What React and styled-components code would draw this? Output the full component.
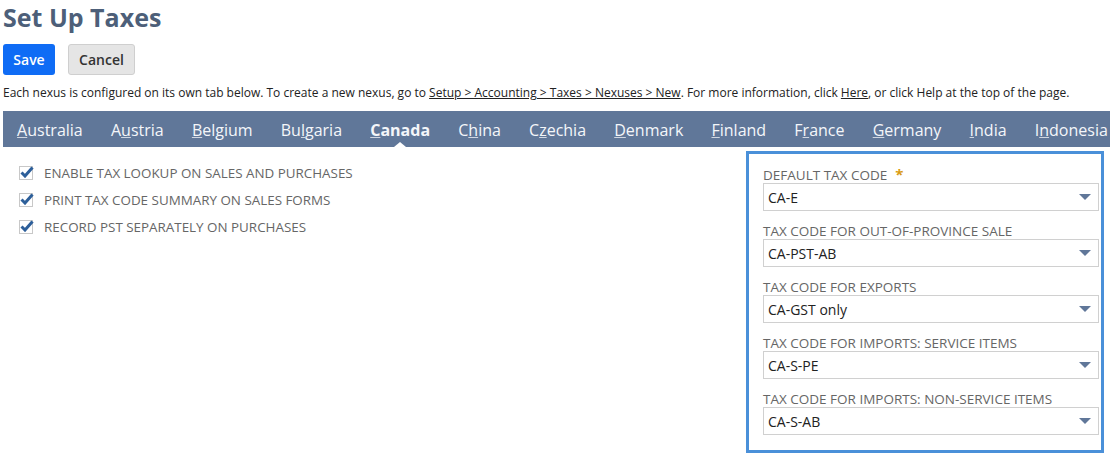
import styled, { createGlobalStyle } from "styled-components";

const GlobalStyle = createGlobalStyle`
  body {
    margin: 0;
    font-family: "Open Sans", "Liberation Sans", sans-serif;
    background: #fff;
  }
`;

const tabs = [
  { name: "Australia", key: 0 },
  { name: "Austria", key: 1 },
  { name: "Belgium", key: 0 },
  { name: "Bulgaria", key: 2 },
  { name: "Canada", key: 0, active: true },
  { name: "China", key: 1 },
  { name: "Czechia", key: 1 },
  { name: "Denmark", key: 0 },
  { name: "Finland", key: 0 },
  { name: "France", key: 1 },
  { name: "Germany", key: 0 },
  { name: "India", key: 0 },
  { name: "Indonesia", key: 1 },
];

const options = [
  "Enable tax lookup on sales and purchases",
  "Print tax code summary on sales forms",
  "Record PST separately on purchases",
];

const fields = [
  { label: "Default Tax Code", value: "CA-E", required: true },
  { label: "Tax Code for Out-of-Province Sale", value: "CA-PST-AB" },
  { label: "Tax Code for Exports", value: "CA-GST only" },
  { label: "Tax Code for Imports: Service Items", value: "CA-S-PE" },
  { label: "Tax Code for Imports: Non-Service Items", value: "CA-S-AB" },
];

const App = () => {
  return (
    <>
      <GlobalStyle />
      <Page>
        <Title>Set Up Taxes</Title>
        <ButtonRow>
          <SaveButton type="button">Save</SaveButton>
          <CancelButton type="button">Cancel</CancelButton>
        </ButtonRow>
        <Intro>
          Each nexus is configured on its own tab below. To create a new nexus, go to{" "}
          <a href="#">Setup &gt; Accounting &gt; Taxes &gt; Nexuses &gt; New</a>. For more
          information, click <a href="#">Here</a>, or click Help at the top of the page.
        </Intro>
        <TabBar>
          {tabs.map((t) => (
            <Tab key={t.name} active={t.active}>
              {t.name.slice(0, t.key)}
              <u>{t.name[t.key]}</u>
              {t.name.slice(t.key + 1)}
            </Tab>
          ))}
        </TabBar>
        <Content>
          <Options>
            {options.map((o) => (
              <OptionRow key={o}>
                <CheckBox>
                  <svg width="14" height="12" viewBox="0 0 14 12">
                    <path d="M1.5 6.5 L5 10 L12.5 1.5" fill="none" stroke="#2d5f9a" strokeWidth="3" />
                  </svg>
                </CheckBox>
                <OptionLabel>{o}</OptionLabel>
              </OptionRow>
            ))}
          </Options>
          <Panel>
            {fields.map((f) => (
              <Field key={f.label}>
                <FieldLabel>
                  {f.label}
                  {f.required && <Required>*</Required>}
                </FieldLabel>
                <Select>
                  {f.value}
                  <Arrow />
                </Select>
              </Field>
            ))}
          </Panel>
        </Content>
      </Page>
    </>
  );
};
export default App;

const Page = styled.div`
  width: 1110px;
  height: 459px;
  overflow: hidden;
`;

const Title = styled.h1`
  margin: 0;
  padding: 0 0 0 3px;
  height: 36px;
  line-height: 34px;
  font-size: 25px;
  font-weight: 700;
  color: #4d5f79;
`;

const ButtonRow = styled.div`
  display: flex;
  gap: 13px;
  padding: 8px 0 0 3px;
`;

const SaveButton = styled.button`
  height: 31px;
  width: 52px;
  border: none;
  border-radius: 3px;
  background: #0f6cf5;
  color: #fff;
  font-family: inherit;
  font-size: 14px;
  font-weight: 600;
  padding: 0;
`;

const CancelButton = styled(SaveButton)`
  width: 67px;
  background: #e5e5e5;
  border: 1px solid #cfcfcf;
  color: #333;
`;

const Intro = styled.p`
  margin: 0;
  padding: 10px 0 0 3px;
  font-size: 12px;
  line-height: 16px;
  color: #222;
  white-space: nowrap;

  a {
    color: #222;
    text-decoration: underline;
  }
`;

const TabBar = styled.div`
  display: flex;
  margin: 10px 0 0 3px;
  height: 36px;
  background: #607799;
  align-items: stretch;
`;

const Tab = styled.div`
  position: relative;
  padding: 3px 14.1px 0;
  font-size: 16px;
  line-height: 33px;
  color: #f4f6f9;
  white-space: nowrap;
  font-weight: ${(p) => (p.active ? 700 : 400)};

  u {
    text-decoration-color: rgba(255, 255, 255, 0.7);
  }

  &::after {
    content: "";
    display: ${(p) => (p.active ? "block" : "none")};
    position: absolute;
    left: 50%;
    bottom: 0;
    margin-left: -6px;
    border-left: 6px solid transparent;
    border-right: 6px solid transparent;
    border-bottom: 5px solid #fff;
  }
`;

const Content = styled.div`
  display: flex;
  justify-content: space-between;
  align-items: flex-start;
  padding: 4px 6px 0 19px;
`;

const Options = styled.div`
  display: flex;
  flex-direction: column;
  gap: 7px;
  padding-top: 12px;
`;

const OptionRow = styled.div`
  display: flex;
  align-items: center;
  gap: 11px;
  height: 20px;
`;

const CheckBox = styled.span`
  position: relative;
  width: 12px;
  height: 12px;
  border: 1px solid #c8c8c8;
  background: #fff;

  svg {
    position: absolute;
    left: 0;
    top: -1px;
  }
`;

const OptionLabel = styled.span`
  font-size: 13.4px;
  color: #666;
  text-transform: uppercase;
`;

const Panel = styled.div`
  width: 336px;
  border: 3px solid #4a90d9;
  padding: 12px 2px 15px 14px;
  display: flex;
  flex-direction: column;
  gap: 12px;
`;

const Field = styled.div`
  display: flex;
  flex-direction: column;
`;

const FieldLabel = styled.div`
  font-size: 13.5px;
  line-height: 16px;
  color: #666;
  text-transform: uppercase;
`;

const Required = styled.span`
  color: #d99b12;
  font-weight: 700;
  font-size: 15px;
  margin-left: 8px;
`;

const Select = styled.div`
  display: flex;
  align-items: center;
  justify-content: space-between;
  height: 26px;
  border: 1px solid #d0d0d0;
  padding: 0 7px 0 4px;
  font-size: 14px;
  color: #222;
`;

const Arrow = styled.span`
  width: 0;
  height: 0;
  border-left: 6px solid transparent;
  border-right: 6px solid transparent;
  border-top: 6px solid #607799;
`;
